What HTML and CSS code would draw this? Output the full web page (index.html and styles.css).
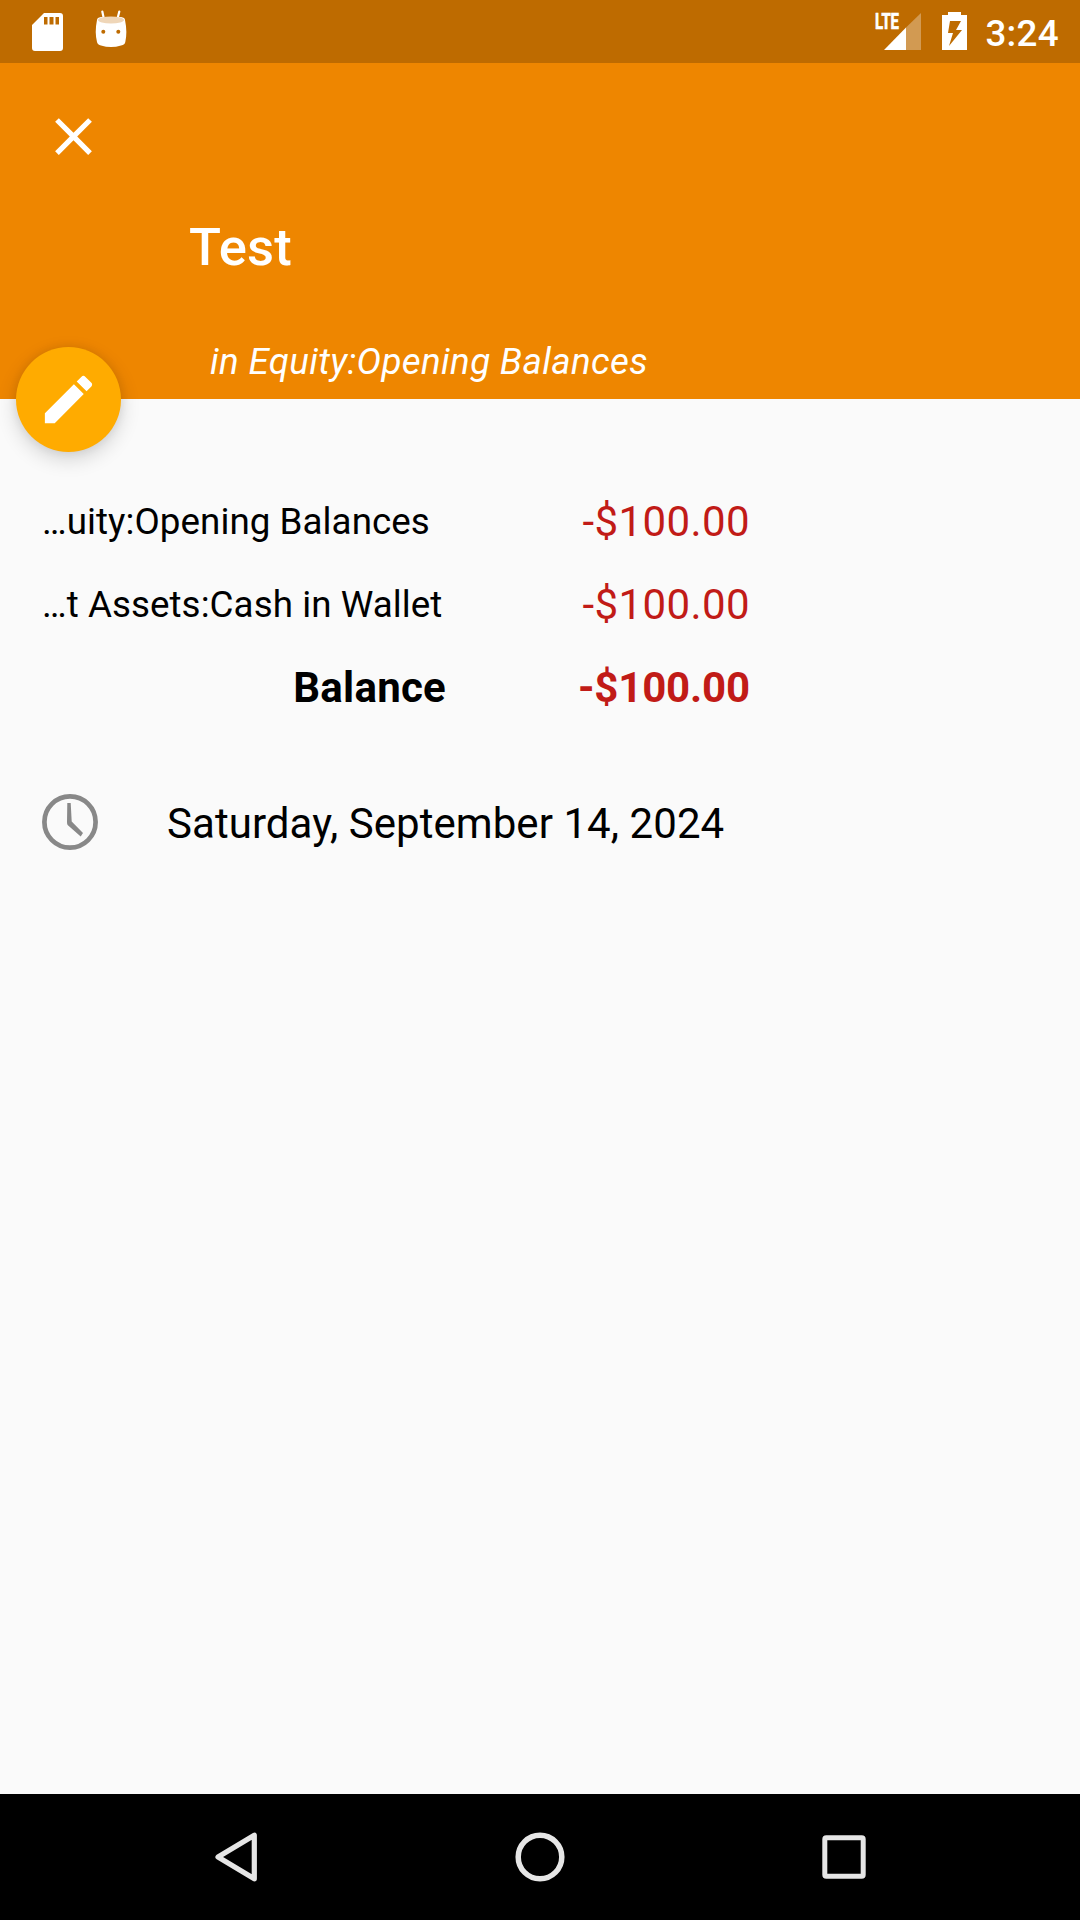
FILE: index.html
```html
<!DOCTYPE html>
<html lang="en">
<head>
<meta charset="utf-8">
<title>Test</title>
<link rel="stylesheet" href="styles.css">
</head>
<body>
<div class="screen">
  <div class="status-bar">
    <div class="status-group">
      <svg class="icon-sd" viewBox="0 0 31 38"><path fill="#fff" fill-rule="evenodd" d="M12 0H28Q31 0 31 3V35Q31 38 28 38H3Q0 38 0 35V12ZM12 4V11.500H15.500V4ZM17.500 4V11.500H21.500V4ZM23.500 4V11.500H27V4Z"/></svg>
      <svg class="icon-droid" viewBox="0 0 32 38">
        <path d="M7.300 1.500 8.700 8M24.300 1.500 22.700 8" stroke="#fff" stroke-width="2.200" stroke-linecap="round"/>
        <path fill="#fff" d="M2 10Q2 7.500 6 7H26Q30 7.500 30 10Q32.500 22 30.300 32Q30 34.500 26 35.500Q16 38.500 6 35.500Q2.500 34.500 2 32Q-.5 22 2 10Z"/>
        <circle cx="8.300" cy="21.700" r="2" fill="#be6b00"/>
        <circle cx="23.300" cy="21.700" r="2" fill="#be6b00"/>
        <ellipse cx="16" cy="10" rx="13" ry="3.500" fill="#efd6b8"/>
      </svg>
    </div>
    <div class="status-group status-right">
      <svg class="icon-signal" viewBox="0 0 46 38">
        <path fill="#d29a52" d="M46 0V37H31V14.500Z"/>
        <path fill="#fff" d="M31 14.500V37H9Z"/>
        <text x="0" y="16" class="lte" textLength="24" lengthAdjust="spacingAndGlyphs">LTE</text>
      </svg>
      <svg class="icon-battery" viewBox="0 0 25 38"><path fill="#fff" fill-rule="evenodd" d="M6 0H19V3H25V38H0V3H6ZM8 9 6 21H11L7 34 20 18H14L19 9Z"/></svg>
      <span class="clock">3:24</span>
    </div>
  </div>

  <header class="header">
    <svg class="close" viewBox="0 0 24 24"><path fill="#fff" d="M19 6.410 17.590 5 12 10.590 6.410 5 5 6.410 10.590 12 5 17.590 6.410 19 12 13.410 17.590 19 19 17.590 13.410 12z"/></svg>
    <h1 class="title">Test</h1>
    <p class="account">in Equity:Opening Balances</p>
    <div class="fab">
      <svg class="pencil" viewBox="0 0 24 24"><path fill="#fff" d="M3 17.250V21h3.750L17.810 9.940l-3.750-3.750L3 17.250zM20.710 7.040c.39-.39.39-1.020 0-1.410l-2.340-2.340c-.39-.39-1.020-.39-1.410 0l-1.830 1.830 3.750 3.750 1.830-1.830z"/></svg>
    </div>
  </header>

  <main class="content">
    <div class="row"><span class="name">…uity:Opening Balances</span><span class="amount">-$100.00</span></div>
    <div class="row"><span class="name">…t Assets:Cash in Wallet</span><span class="amount">-$100.00</span></div>
    <div class="row total"><span class="name">Balance</span><span class="amount">-$100.00</span></div>
    <div class="date">
      <svg class="icon-time" viewBox="0 0 56 56">
        <circle cx="28" cy="28" r="25.600" fill="none" stroke="#888" stroke-width="4.700"/>
        <path fill="#888" d="M25.300 9H28.700L29.700 27.500 41 39 38.700 42.500 25.600 31Q25 30 25 28Z"/>
      </svg>
      <span class="day">Saturday, September 14, 2024</span>
    </div>
  </main>

  <nav class="nav-bar">
    <svg viewBox="0 0 56 56"><path d="M46.300 6.200V49.800L10 28Z" fill="none" stroke="#e6e6e6" stroke-width="5.200" stroke-linejoin="round"/></svg>
    <svg viewBox="0 0 56 56"><circle cx="28" cy="28" r="21.800" fill="none" stroke="#e6e6e6" stroke-width="5.500"/></svg>
    <svg viewBox="0 0 56 56"><rect x="8.800" y="8.800" width="38.400" height="38.400" rx="1.500" fill="none" stroke="#e6e6e6" stroke-width="5"/></svg>
  </nav>
</div>
</body>
</html>
```
FILE: styles.css
```css
* { box-sizing: border-box; }
body { margin: 0; font-family: Roboto, "Liberation Sans", sans-serif; }
svg { display: block; flex: none; overflow: visible; }

.screen {
  width: 1080px;
  height: 1920px;
  display: flex;
  flex-direction: column;
  background: #fafafa;
  color: #000;
}

.status-bar {
  height: 63px;
  padding: 0 21px 0 32px;
  display: flex;
  justify-content: space-between;
  background: #be6b00;
}
.status-group { display: flex; align-items: flex-start; }
.icon-sd { width: 31px; height: 38px; margin-top: 12.500px; }
.icon-droid { width: 32px; height: 38px; margin: 10px 0 0 31.500px; }
.icon-signal { width: 46px; height: 38px; margin-top: 12.500px; }
.lte { font-size: 22px; font-weight: 700; fill: #fff; stroke: #fff; stroke-width: .7px; }
.icon-battery { width: 25px; height: 38px; margin: 12px 0 0 21px; }
.clock {
  margin-left: 18.500px;
  font-size: 36.750px;
  font-weight: 500;
  line-height: 67px;
  letter-spacing: .3px;
  color: #fff;
}

.header {
  position: relative;
  height: 336px;
  padding-top: 42px;
  background: #ee8600;
  color: #fff;
}
.close { width: 63px; height: 63px; margin-left: 42px; }
.title {
  margin: 48px 0 0 189px;
  font-size: 52.500px;
  font-weight: 500;
  line-height: 62px;
  letter-spacing: .2px;
}
.account {
  margin: 62px 0 0 210px;
  font-size: 36.750px;
  font-style: italic;
  line-height: 44px;
  letter-spacing: .34px;
}
.fab {
  position: absolute;
  left: 16px;
  bottom: -52.500px;
  width: 105px;
  height: 105px;
  display: grid;
  place-items: center;
  border-radius: 50%;
  background: #ffab00;
  box-shadow: 0 7px 20px rgba(0, 0, 0, .16), 0 0 10px rgba(0, 0, 0, .08);
}
.pencil { width: 63px; height: 63px; }

.content { flex: 1; padding: 81px 42px 0; }
.row {
  width: 708px;
  height: 83px;
  display: grid;
  grid-template-columns: 404px 304px;
  align-items: center;
}
.name { font-size: 36.750px; letter-spacing: .06px; white-space: nowrap; }
.amount { font-size: 42px; letter-spacing: .4px; text-align: right; color: #c11b17; }
.total { font-weight: 700; }
.total .name { font-size: 42px; letter-spacing: .25px; text-align: right; }
.total .amount { letter-spacing: -.15px; }
.date {
  height: 56px;
  margin-top: 65px;
  display: flex;
  align-items: center;
  gap: 69px;
  font-size: 42px;
}
.day { padding-top: 4px; line-height: 60px; letter-spacing: .06px; }
.icon-time { width: 56px; height: 56px; }

.nav-bar {
  height: 126px;
  display: grid;
  grid-template-columns: repeat(3, 304px);
  justify-content: center;
  align-items: center;
  justify-items: center;
  background: #000;
}
.nav-bar svg { width: 56px; height: 56px; }
```
